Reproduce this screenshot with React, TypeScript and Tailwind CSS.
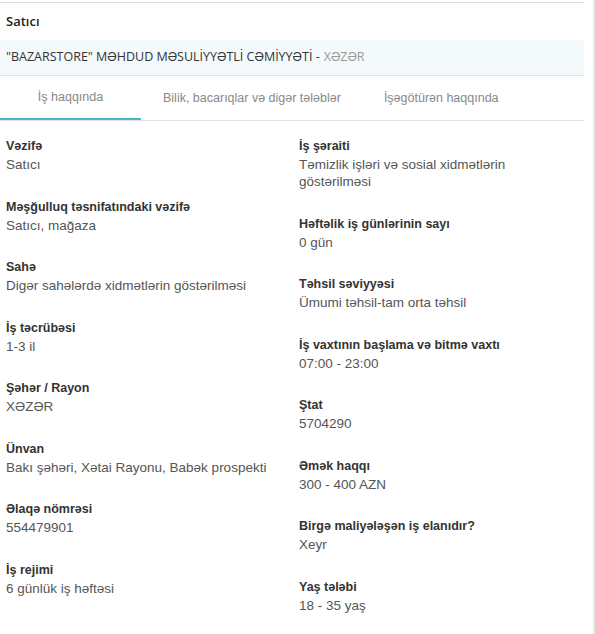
const left = [
  { label: 'Vəzifə', value: 'Satıcı' },
  { label: 'Məşğulluq təsnifatındaki vəzifə', value: 'Satıcı, mağaza' },
  { label: 'Sahə', value: 'Digər sahələrdə xidmətlərin göstərilməsi' },
  { label: 'İş təcrübəsi', value: '1-3 il' },
  { label: 'Şəhər / Rayon', value: 'XƏZƏR' },
  { label: 'Ünvan', value: 'Bakı şəhəri, Xətai Rayonu, Babək prospekti' },
  { label: 'Əlaqə nömrəsi', value: '554479901' },
  { label: 'İş rejimi', value: '6 günlük iş həftəsi' },
];

const right = [
  { label: 'İş şəraiti', value: 'Təmizlik işləri və sosial xidmətlərin göstərilməsi' },
  { label: 'Həftəlik iş günlərinin sayı', value: '0 gün' },
  { label: 'Təhsil səviyyəsi', value: 'Ümumi təhsil-tam orta təhsil' },
  { label: 'İş vaxtının başlama və bitmə vaxtı', value: '07:00 - 23:00' },
  { label: 'Ştat', value: '5704290' },
  { label: 'Əmək haqqı', value: '300 - 400 AZN' },
  { label: 'Birgə maliyələşən iş elanıdır?', value: 'Xeyr' },
  { label: 'Yaş tələbi', value: '18 - 35 yaş' },
];

function Field({ label, value }: { label: string; value: string }) {
  return (
    <div className="mb-[24.5px]">
      <div className="text-[12.5px] font-bold leading-[19px] text-[#333]">{label}</div>
      <div className="text-[13.5px] leading-[17px] text-[#555]">{value}</div>
    </div>
  );
}

export default function App() {
  return (
    <div className="flex h-[634px] w-[595px] bg-white font-['Liberation_Sans',Arial,sans-serif]">
      <div className="w-[584px]">
        <div className="mt-[2px] border-t border-[#d3e0e8]" />
        <div className="flex h-[37px] items-center px-[6px] font-['Open_Sans',sans-serif] text-[13px] font-semibold text-[#222]">
          Satıcı
        </div>
        <div className="flex h-[36px] items-center border-b border-[#d9e3ea] bg-[#f4f9fc] px-[6px] font-['Open_Sans',sans-serif] text-[12.5px] text-[#333]">
          "BAZARSTORE" MƏHDUD MƏSULİYYƏTLİ CƏMİYYƏTİ -
          <span className="ml-[4px] text-[#999]">XƏZƏR</span>
        </div>
        <div className="flex h-[45px] border-b border-[#e3e3e3] text-[12.5px] text-[#888]">
          <div className="flex w-[141px] items-center justify-center border-b-2 border-[#4ab2cb]">İş haqqında</div>
          <div className="flex items-center px-[22px]">Bilik, bacarıqlar və digər tələblər</div>
          <div className="flex items-center px-[21px]">İşəgötürən haqqında</div>
        </div>
        <div className="grid grid-cols-[279px_274px] gap-x-[14px] px-[6px] pt-[16px]">
          <div>
            {left.map((f) => (
              <Field key={f.label} label={f.label} value={f.value} />
            ))}
          </div>
          <div>
            {right.map((f) => (
              <Field key={f.label} label={f.label} value={f.value} />
            ))}
          </div>
        </div>
      </div>
      <div className="ml-auto w-[2px] bg-[#e8e8e8]" />
    </div>
  );
}
